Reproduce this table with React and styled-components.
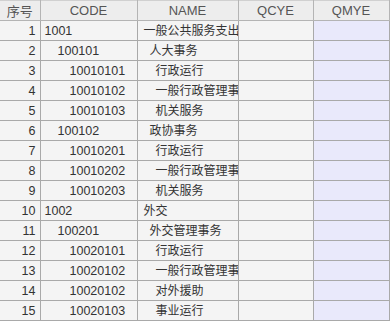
import React from 'react';
import styled, { createGlobalStyle } from 'styled-components';

const GlobalStyle = createGlobalStyle`
  body {
    margin: 0;
    background: #ffffff;
    font-family: "Liberation Sans", "Noto Sans CJK SC", sans-serif;
  }
`;

const Grid = styled.table`
  border-collapse: collapse;
  table-layout: fixed;
  width: 389px;
  font-size: 12.5px;
  color: #333333;
`;

const HeadCell = styled.th`
  height: 19px;
  padding: 0;
  background: #ededed;
  color: #555555;
  font-weight: normal;
  font-size: 13px;
  text-align: center;
  border: 1px solid #b4b4b4;
  border-top: 1px solid #d0d0d0;
  border-left: ${p => (p.$first ? 'none' : '1px solid #b4b4b4')};
`;

const Cell = styled.td`
  height: 19px;
  padding: 0 ${p => (p.$clip ? 0 : 4)}px 0 ${p => p.$indent || 4}px;
  background: ${p => (p.$edit ? '#e9e9fb' : '#f4f4f4')};
  border: 1px solid #a9a9a9;
  border-left: ${p => (p.$first ? 'none' : '1px solid #a9a9a9')};
  text-align: ${p => (p.$right ? 'right' : 'left')};
  font-size: ${p => (p.$clip ? '12px' : 'inherit')};
  white-space: nowrap;
  overflow: hidden;
  line-height: 18px;
`;

const rows = [
  ['1001', '一般公共服务支出', 1],
  ['100101', '人大事务', 2],
  ['10010101', '行政运行', 3],
  ['10010102', '一般行政管理事务', 3],
  ['10010103', '机关服务', 3],
  ['100102', '政协事务', 2],
  ['10010201', '行政运行', 3],
  ['10010202', '一般行政管理事务', 3],
  ['10010203', '机关服务', 3],
  ['1002', '外交', 1],
  ['100201', '外交管理事务', 2],
  ['10020101', '行政运行', 3],
  ['10020102', '一般行政管理事务', 3],
  ['10020102', '对外援助', 3],
  ['10020103', '事业运行', 3],
];

const codeIndent = { 1: 4, 2: 17, 3: 29 };
const nameIndent = { 1: 6, 2: 12, 3: 18 };

export default function App() {
  return (
    <>
      <GlobalStyle />
      <Grid>
        <colgroup>
          <col style={{ width: 40 }} />
          <col style={{ width: 97 }} />
          <col style={{ width: 101 }} />
          <col style={{ width: 75 }} />
          <col style={{ width: 76 }} />
        </colgroup>
        <thead>
          <tr>
            <HeadCell $first>序号</HeadCell>
            <HeadCell>CODE</HeadCell>
            <HeadCell>NAME</HeadCell>
            <HeadCell>QCYE</HeadCell>
            <HeadCell>QMYE</HeadCell>
          </tr>
        </thead>
        <tbody>
          {rows.map(([code, name, level], i) => (
            <tr key={i}>
              <Cell $first $right>{i + 1}</Cell>
              <Cell $indent={codeIndent[level]}>{code}</Cell>
              <Cell $clip $indent={nameIndent[level]}>{name}</Cell>
              <Cell />
              <Cell $edit />
            </tr>
          ))}
        </tbody>
      </Grid>
    </>
  );
}
